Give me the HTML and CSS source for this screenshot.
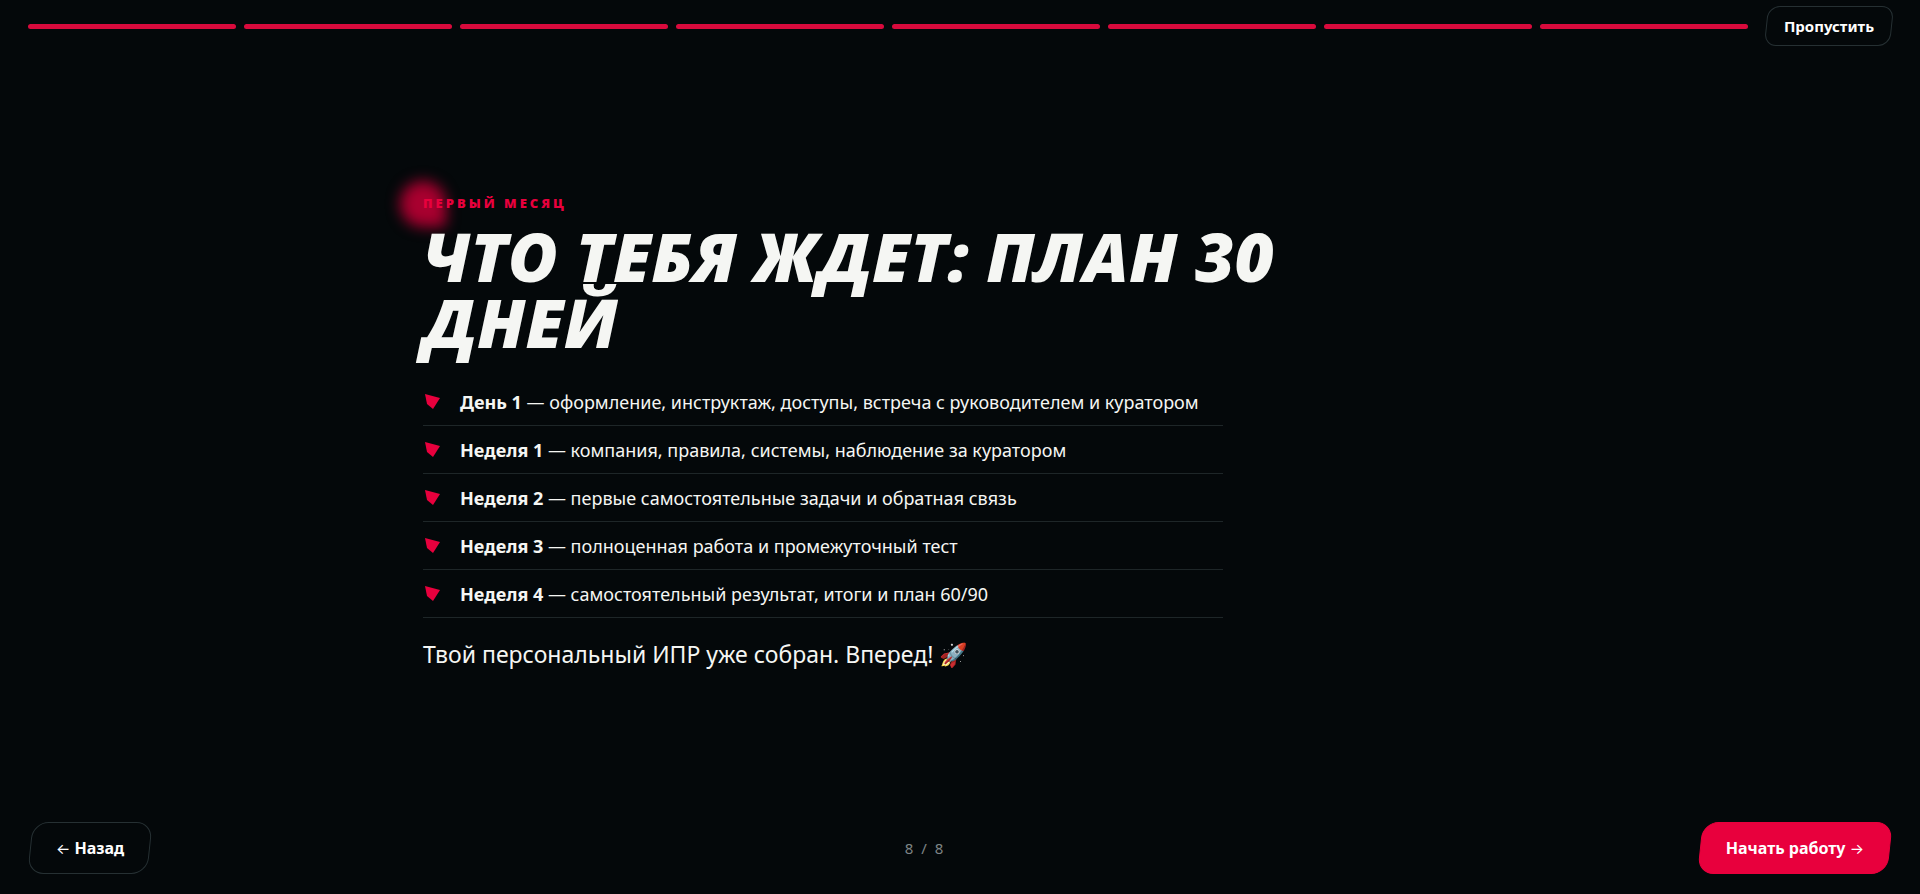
FILE: index.html
```html
<!DOCTYPE html>
<html lang="ru">
<head>
    <meta charset="UTF-8">
    <meta name="viewport" content="width=device-width, initial-scale=1.0">
    <title>Первый месяц</title>
    <link rel="stylesheet" href="styles.css">
</head>
<body>
    <header class="topbar">
        <div class="progress">
            <span class="bar"></span>
            <span class="bar"></span>
            <span class="bar"></span>
            <span class="bar"></span>
            <span class="bar"></span>
            <span class="bar"></span>
            <span class="bar"></span>
            <span class="bar"></span>
        </div>
        <button type="button" class="btn btn-small">Пропустить</button>
    </header>

    <main class="slide">
        <p class="eyebrow">Первый месяц</p>
        <h1>Что тебя ждет: план 30 дней</h1>
        <ul class="plan">
            <li><svg class="shard" viewBox="0 0 17 17" aria-hidden="true"><path d="M2 1L17 5L10 16L4 11Z"/></svg><span><b>День 1</b> — оформление, инструктаж, доступы, встреча с руководителем и куратором</span></li>
            <li><svg class="shard" viewBox="0 0 17 17" aria-hidden="true"><path d="M2 1L17 5L10 16L4 11Z"/></svg><span><b>Неделя 1</b> — компания, правила, системы, наблюдение за куратором</span></li>
            <li><svg class="shard" viewBox="0 0 17 17" aria-hidden="true"><path d="M2 1L17 5L10 16L4 11Z"/></svg><span><b>Неделя 2</b> — первые самостоятельные задачи и обратная связь</span></li>
            <li><svg class="shard" viewBox="0 0 17 17" aria-hidden="true"><path d="M2 1L17 5L10 16L4 11Z"/></svg><span><b>Неделя 3</b> — полноценная работа и промежуточный тест</span></li>
            <li><svg class="shard" viewBox="0 0 17 17" aria-hidden="true"><path d="M2 1L17 5L10 16L4 11Z"/></svg><span><b>Неделя 4</b> — самостоятельный результат, итоги и план 60/90</span></li>
        </ul>
        <p class="lead">Твой персональный ИПР уже собран. Вперед! 🚀</p>
    </main>

    <footer class="controls">
        <button type="button" class="btn"><span class="arrow">←</span> Назад</button>
        <span class="counter">8 / 8</span>
        <button type="button" class="btn btn-primary">Начать работу <span class="arrow">→</span></button>
    </footer>
</body>
</html>
```

FILE: styles.css
```css
* {
    box-sizing: border-box;
}
body {
    margin: 0;
    min-height: 100vh;
    display: flex;
    flex-direction: column;
    background-color: #04080a;
    color: #f5f6f3;
    font-family: "Noto Sans", "Open Sans", sans-serif;
}
h1, p, ul {
    margin: 0;
    padding: 0;
}
.topbar {
    display: flex;
    align-items: center;
    gap: 18px;
    padding: 6px 28px 0;
}
.progress {
    flex: 1;
    display: flex;
    gap: 8px;
}
.bar {
    flex: 1;
    height: 5px;
    border-radius: 3px;
    background-color: #d80a3c;
}
.btn {
    position: relative;
    z-index: 0;
    padding: 14px 26px;
    border: none;
    background: none;
    color: #fff;
    font: bold 16px/24px "Noto Sans", "Open Sans", sans-serif;
    cursor: pointer;
}
.btn::before {
    content: "";
    position: absolute;
    inset: 0;
    z-index: -1;
    border: 1px solid #263033;
    border-radius: 16px;
    transform: skewX(-6deg);
}
.btn-small {
    padding: 8px 18px;
    font-size: 15px;
}
.btn-small::before {
    border-radius: 12px;
}
.btn-primary::before {
    border-color: #e8003d;
    background-color: #e8003d;
}
.arrow {
    font-family: Inter, sans-serif;
    font-size: 15px;
    line-height: 1;
    font-weight: 400;
}
.slide {
    flex: 1;
    display: flex;
    flex-direction: column;
    justify-content: center;
    width: 100%;
    max-width: 1074px;
    margin: 0 auto;
    padding-bottom: 6px;
}
.eyebrow {
    position: relative;
    color: #e8003d;
    font-family: "Open Sans", "Noto Sans", sans-serif;
    font-size: 13px;
    line-height: 20px;
    font-weight: 800;
    letter-spacing: 3px;
    text-transform: uppercase;
}
/* мягкое пятно света */
.eyebrow::before {
    content: "";
    position: absolute;
    left: -23px;
    top: -12px;
    width: 46px;
    height: 46px;
    border-radius: 50% 50% 10% 50%;
    background-color: #a8002f;
    filter: blur(7px);
    z-index: -1;
}
h1 {
    max-width: 900px;
    margin-top: 10px;
    font-family: "Open Sans", "Noto Sans", sans-serif;
    font-size: 68px;
    line-height: 66px;
    font-weight: 800;
    font-style: italic;
    text-transform: uppercase;
}
.plan {
    max-width: 800px;
    margin-top: 23px;
    list-style: none;
}
.plan li {
    display: flex;
    align-items: center;
    gap: 20px;
    padding: 12px 0 11px;
    border-bottom: 1px solid #1e2628;
    font-size: 18px;
    line-height: 24px;
}
.shard {
    width: 17px;
    height: 17px;
    fill: #e8003d;
}
.lead {
    margin-top: 20px;
    font-size: 23px;
    line-height: 32px;
}
.controls {
    display: flex;
    align-items: center;
    justify-content: space-between;
    padding: 0 30px 20px;
}
.counter {
    color: #7e8485;
    font-size: 15px;
    letter-spacing: 2px;
}
```
